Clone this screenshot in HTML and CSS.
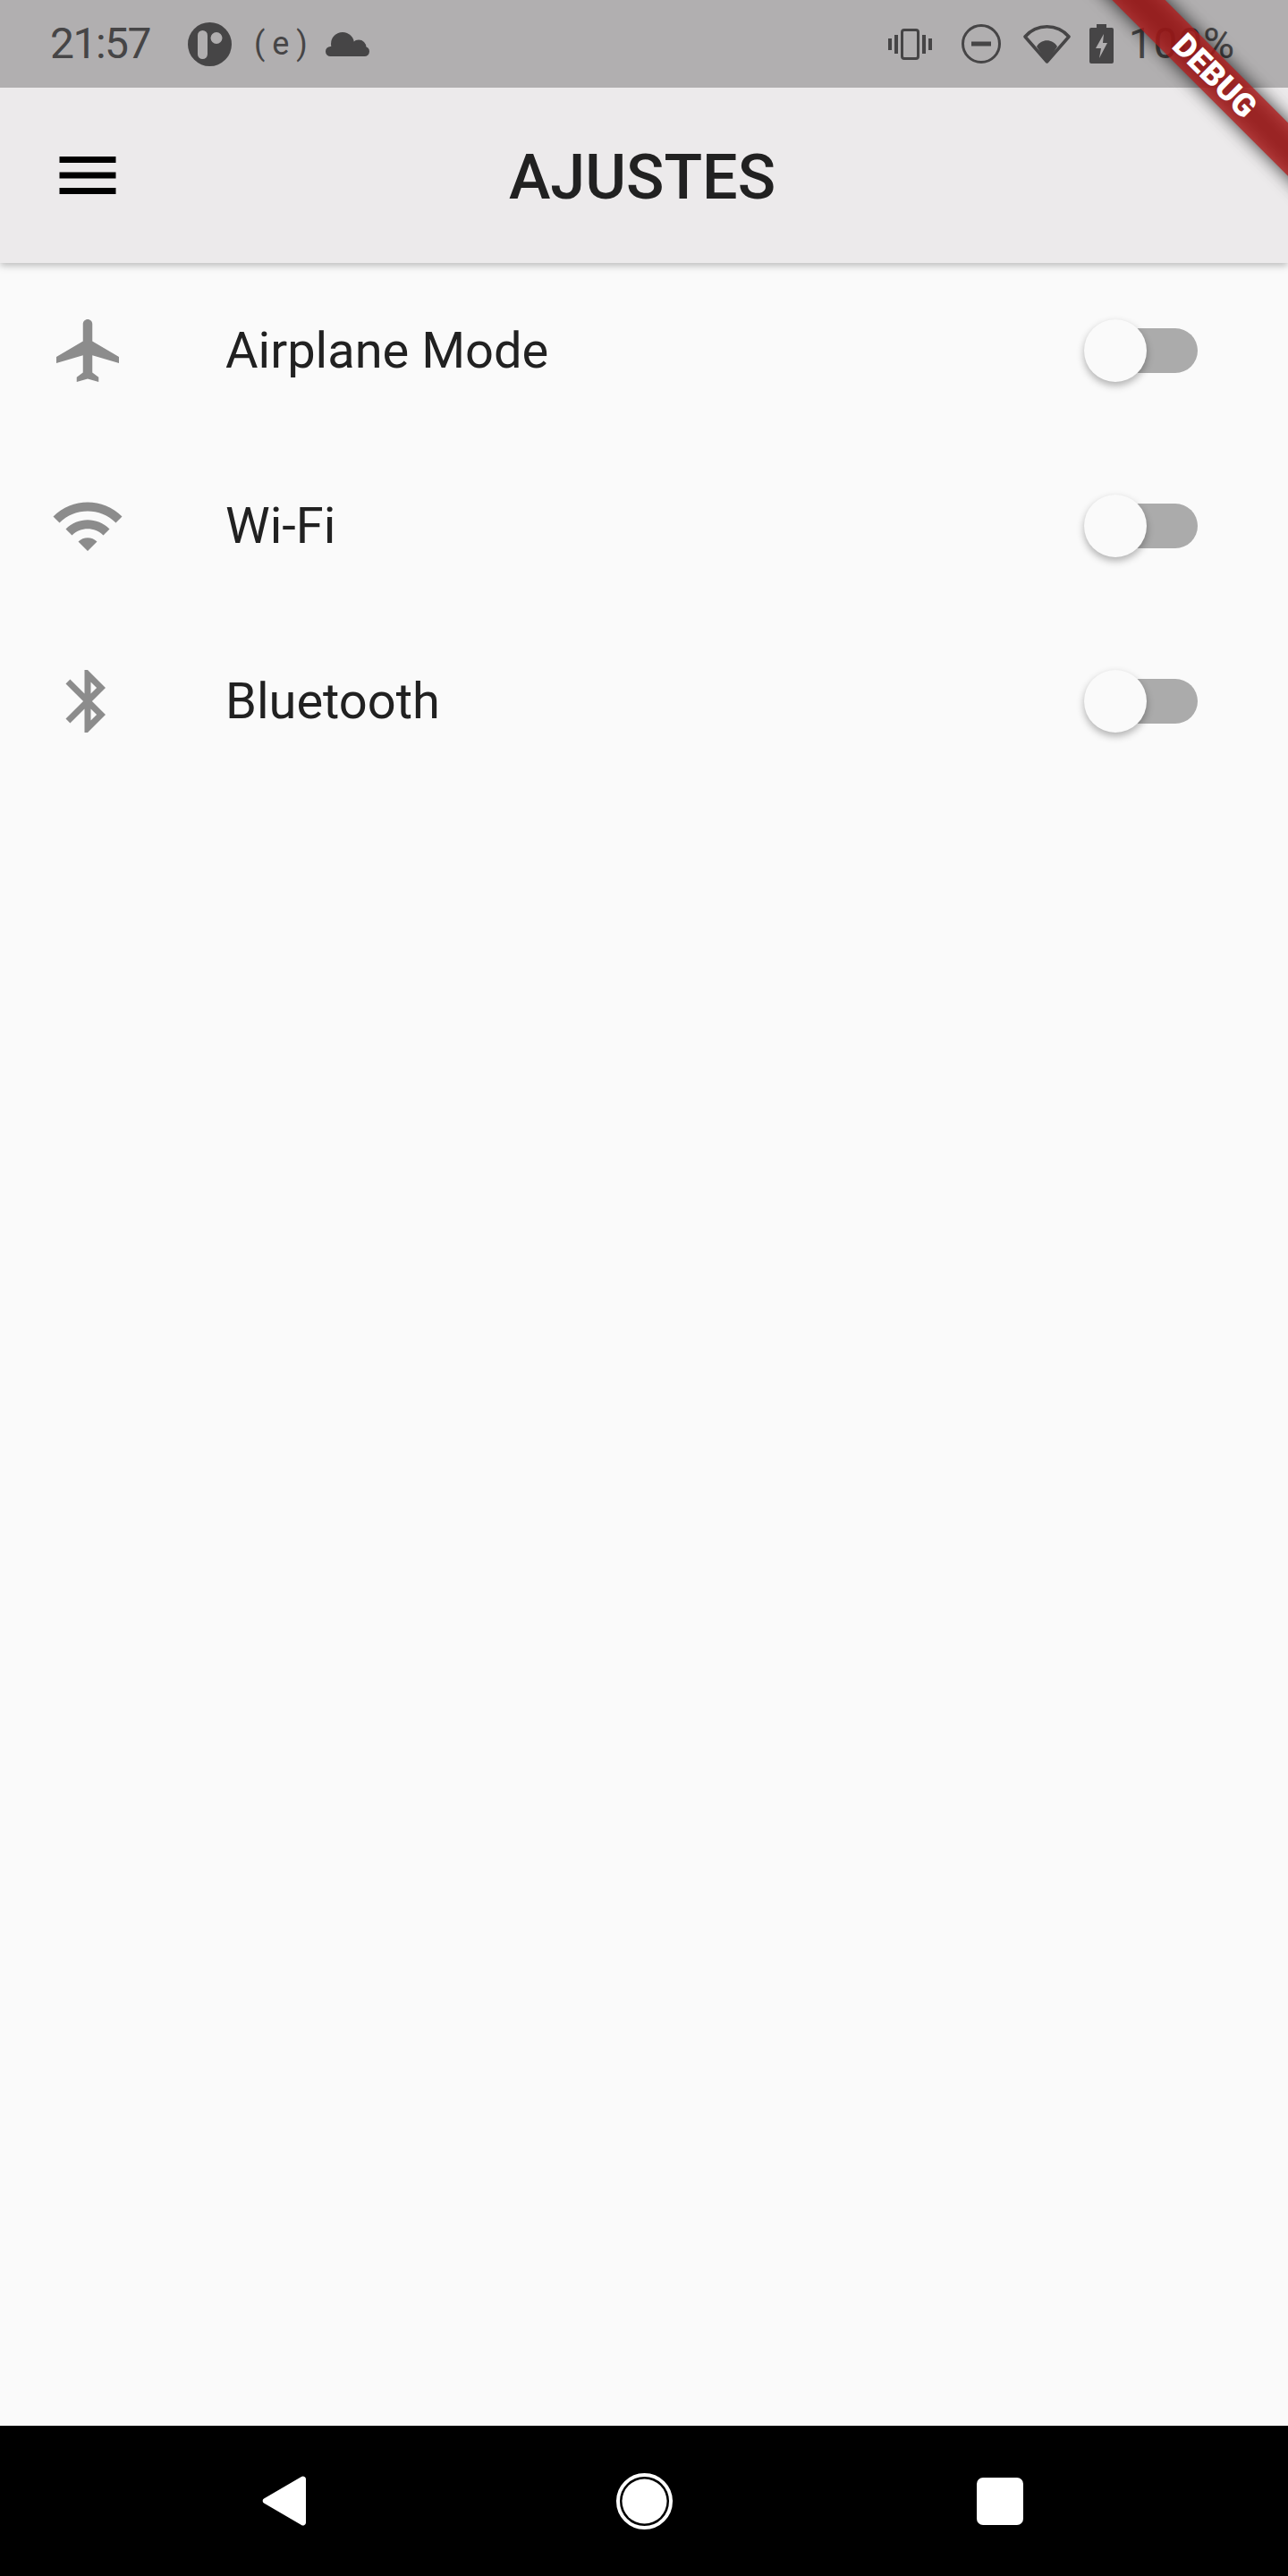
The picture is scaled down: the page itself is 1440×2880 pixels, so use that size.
FILE: index.html
```html
<!DOCTYPE html>
<html>
<head>
  <title>Ajustes</title>

  <link rel="stylesheet" href="styles.css">
</head>
<body>
  <div class="screen">
    <header class="appbar">
      <div class="status">
        <div class="status-left">
          <span class="clock">21:57</span>
          <svg class="ico-p" viewBox="0 0 49 49"><circle cx="24.500" cy="24.500" r="24.500" fill="#464546"/><rect x="11" y="9" width="11" height="32" rx="5.500" fill="#b0aeaf"/><circle cx="32" cy="17.500" r="6.500" fill="#b0aeaf"/></svg>
          <span class="carrier">( e )</span>
          <svg class="ico-cloud" viewBox="0 0 49 27" fill="#464546"><circle cx="19" cy="13" r="13"/><circle cx="37" cy="17" r="8.500"/><rect x="0" y="16" width="49" height="11" rx="5.500"/></svg>
        </div>
        <div class="status-right">
          <svg class="ico-vib" viewBox="0 0 49 35" fill="#464546"><rect x="0" y="11" width="4" height="13"/><rect x="7" y="7" width="4" height="21"/><rect x="15.500" y="1.500" width="18" height="32" rx="2.500" fill="none" stroke="#464546" stroke-width="3"/><rect x="38" y="7" width="4" height="21"/><rect x="45" y="11" width="4" height="13"/></svg>
          <svg class="ico-dnd" viewBox="0 0 44 44"><circle cx="22" cy="22" r="20.500" fill="none" stroke="#464546" stroke-width="3"/><rect x="11" y="19.500" width="22" height="5" fill="#464546"/></svg>
          <svg class="ico-net" viewBox="0 0 53 43"><path d="M26.500 41L2 13C15-2 38-2 51 13z" fill="none" stroke="#464546" stroke-width="3.500" stroke-linejoin="round"/><path d="M26.500 42L15 24C20 15 33 15 38 24z" fill="#464546"/></svg>
          <svg class="ico-bat" viewBox="0 0 27 44"><path d="M8 0h11v4h6a2 2 0 0 1 2 2v36a2 2 0 0 1-2 2H2a2 2 0 0 1-2-2V6a2 2 0 0 1 2-2h6z" fill="#464546"/><path d="M16 11L7 27h6l-2 11 9-17h-5z" fill="#b0aeaf"/></svg>
          <span class="percent">100%</span>
        </div>
      </div>
      <div class="toolbar">
        <svg class="icon" viewBox="0 0 24 24" fill="#000"><path d="M3 18h18v-2H3v2zm0-5h18v-2H3v2zm0-7v2h18V6H3z"/></svg>
        <h1>AJUSTES</h1>
      </div>
    </header>

    <div class="banner"><span>DEBUG</span></div>

    <main class="list">
      <div class="row">
        <svg class="icon" viewBox="0 0 24 24" fill="#8c8c8c"><path d="M22 16v-2l-8.500-5V3.500c0-.83-.67-1.500-1.500-1.500s-1.500.67-1.500 1.500V9L2 14v2l8.500-2.500V19l-2 1.500V22l3.500-1 3.500 1v-1.500l-2-1.500v-5.500z"/></svg>
        <span class="label">Airplane Mode</span>
        <div class="switch"><i></i></div>
      </div>
      <div class="row">
        <svg class="icon" viewBox="0 0 24 24" fill="#8c8c8c"><path d="M1 9l2 2c4.970-4.970 13.030-4.970 18 0l2-2C16.930 2.930 7.080 2.930 1 9zm8 8l3 3 3-3c-1.650-1.660-4.340-1.660-6 0zm-4-4l2 2c2.760-2.760 7.240-2.760 10 0l2-2C15.140 9.140 8.870 9.140 5 13z"/></svg>
        <span class="label">Wi-Fi</span>
        <div class="switch"><i></i></div>
      </div>
      <div class="row">
        <svg class="icon" viewBox="0 0 24 24" fill="#8c8c8c"><path d="M17.710 7.710L12 2h-1v7.590L6.410 5 5 6.410 10.590 12 5 17.590 6.410 19 11 14.410V22h1l5.710-5.710-4.300-4.290 4.300-4.290zM13 5.830l1.880 1.880L13 9.590V5.830zm1.880 10.460L13 18.170v-3.760l1.880 1.880z"/></svg>
        <span class="label">Bluetooth</span>
        <div class="switch"><i></i></div>
      </div>
    </main>

    <footer class="navbar">
      <svg class="nav-back" viewBox="0 0 49 56"><path d="M44 1L2 25.500a3 3 0 0 0 0 5L44 55a3.300 3.300 0 0 0 5-3V4a3.300 3.300 0 0 0-5-3z" fill="#fff"/></svg>
      <svg class="nav-home" viewBox="0 0 63 63"><circle cx="31.500" cy="31.500" r="29.500" fill="none" stroke="#fff" stroke-width="4"/><circle cx="31.500" cy="31.500" r="25" fill="#fff"/></svg>
      <div class="nav-recent"></div>
    </footer>
  </div>
</body>
</html>
```

FILE: styles.css
```css
html,
body {
  margin: 0;
  padding: 0;
}

body {
  background-color: #fafafa;
  color: #212121;
  font-family: Roboto, sans-serif;
}

.screen {
  display: flex;
  flex-direction: column;
  height: 2880px;
  overflow: hidden;
  position: relative;
  width: 1440px;
}

.appbar {
  background-color: #eceaeb;
  box-shadow: 0 3px 8px rgba(0, 0, 0, .25);
  flex: none;
  height: 294px;
  position: relative;
  z-index: 1;
}

.status {
  align-items: center;
  background-color: rgba(0, 0, 0, .25);
  color: #464546;
  display: flex;
  height: 98px;
  justify-content: space-between;
  position: relative;
  z-index: 3;
}

.status-left,
.status-right {
  align-items: center;
  display: flex;
}

.status-left {
  margin-left: 56px;
}

.status-right {
  margin-right: 59px;
}

.clock,
.percent {
  font-size: 48px;
  line-height: 1;
}

.clock {
  letter-spacing: -1.500px;
  width: 154px;
}

.ico-p {
  height: 49px;
  width: 49px;
}

.carrier {
  font-size: 36px;
  margin-left: 25px;
  text-align: left;
  white-space: nowrap;
  width: 55px;
  word-spacing: -1px;
}

.ico-cloud {
  height: 27px;
  margin-left: 25px;
  width: 49px;
}

.ico-vib {
  height: 35px;
  width: 49px;
}

.ico-dnd {
  height: 44px;
  margin-left: 33px;
  width: 44px;
}

.ico-net {
  height: 43px;
  margin-left: 25px;
  width: 53px;
}

.ico-bat {
  height: 44px;
  margin-left: 21px;
  width: 27px;
}

.percent {
  letter-spacing: .800px;
  margin-left: 17px;
}

.toolbar {
  align-items: center;
  display: flex;
  height: 196px;
  padding: 0 56px;
}

.toolbar h1 {
  flex: 1;
  font-size: 70px;
  font-weight: 500;
  margin: 3px 88px 0 0;
  text-align: center;
}

.icon {
  flex: none;
  height: 84px;
  width: 84px;
}

.banner {
  height: 42px;
  left: 1158px;
  position: absolute;
  top: 64px;
  transform: rotate(45deg);
  width: 400px;
  z-index: 2;
}

.banner::before {
  background-color: rgba(0, 0, 0, .75);
  content: "";
  filter: blur(10px);
  inset: 0;
  position: absolute;
}

.banner span {
  background-color: rgba(183, 28, 28, .76);
  color: #fff;
  display: block;
  font-size: 36px;
  font-weight: 900;
  height: 42px;
  line-height: 42px;
  position: relative;
  text-align: center;
}

.list {
  flex: 1;
}

.row {
  align-items: center;
  display: flex;
  height: 196px;
  padding: 0 101px 0 56px;
}

.label {
  flex: 1;
  font-size: 56px;
  margin-left: 112px;
}

.switch {
  background-color: #ababab;
  border-radius: 25px;
  height: 50px;
  position: relative;
  width: 112px;
}

.switch i {
  background-color: #fafafa;
  border-radius: 50%;
  box-shadow: 0 4px 8px rgba(0, 0, 0, .3);
  height: 70px;
  left: -15px;
  position: absolute;
  top: -10px;
  width: 70px;
}

.navbar {
  align-items: center;
  background-color: #000;
  display: flex;
  flex: none;
  height: 168px;
  justify-content: center;
  padding-right: 3px;
}

.nav-back {
  height: 56px;
  width: 49px;
}

.nav-home {
  height: 63px;
  margin-left: 347px;
  width: 63px;
}

.nav-recent {
  background-color: #fff;
  border-radius: 7px;
  height: 53px;
  margin-left: 340px;
  width: 52px;
}
```
